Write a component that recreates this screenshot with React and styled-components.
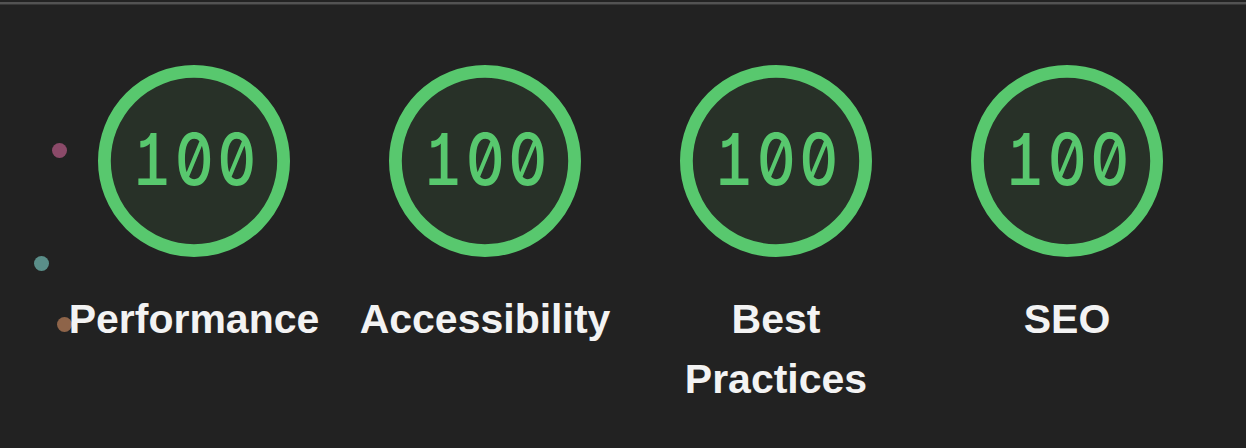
import React from "react";
import styled, { createGlobalStyle } from "styled-components";

const Global = createGlobalStyle`
  html, body { margin: 0; padding: 0; background: #222222; }
  body { width: 1246px; height: 448px; overflow: hidden; }
`;

const Page = styled.div`
  position: relative;
  width: 1246px;
  height: 448px;
  box-sizing: border-box;
  background: #222222;
  border-top: 2px solid #232323;
  overflow: hidden;
`;

const TopRule = styled.div`
  height: 2px;
  background: #535353;
  border-bottom: 1px solid #383838;
`;

const Row = styled.div`
  position: relative;
  z-index: 1;
  display: flex;
  align-items: flex-start;
  gap: 31px;
  padding: 60px 0 0 64px;
`;

const Gauge = styled.div`
  width: 260px;
  display: flex;
  flex-direction: column;
  align-items: center;
`;

const Ring = styled.div`
  position: relative;
  width: 192px;
  height: 192px;
  display: flex;
  align-items: center;
  justify-content: center;
`;

const RingSvg = styled.svg`
  position: absolute;
  inset: 0;
  width: 192px;
  height: 192px;
`;

const Score = styled.span`
  position: relative;
  display: inline-block;
  font-family: Inter, "DejaVu Sans Mono", monospace;
  font-weight: 500;
  font-size: 71px;
  line-height: 1;
  color: #58c86e;
  margin: -4px 0 0 4px;
  font-feature-settings: "zero" 1, "tnum" 1, "cv01" 1;
  letter-spacing: 4px;
  transform: scaleX(0.85);
`;

const Label = styled.div`
  margin-top: 32px;
  font-family: "Liberation Sans", Arial, sans-serif;
  font-weight: 700;
  font-size: 41px;
  line-height: 60px;
  color: #f3f3f3;
  text-align: center;
  max-width: 260px;
`;

const Dot = styled.span`
  position: absolute;
  z-index: 0;
  width: 15px;
  height: 15px;
  border-radius: 50%;
  background: ${(p) => p.$color};
  left: ${(p) => p.$x - 7.5}px;
  top: ${(p) => p.$y - 9.5}px;
`;

const gauges = [
  { score: 100, label: "Performance" },
  { score: 100, label: "Accessibility" },
  { score: 100, label: "Best Practices" },
  { score: 100, label: "SEO" },
];

function GaugeItem({ score, label }) {
  return (
    <Gauge>
      <Ring>
        <RingSvg viewBox="0 0 120 120">
          <circle cx="60" cy="60" r="56" fill="#283128" stroke="#58c86e" strokeWidth="8" />
        </RingSvg>
        <Score>{score}</Score>
      </Ring>
      <Label>{label}</Label>
    </Gauge>
  );
}

export default function App() {
  return (
    <>
      <Global />
      <Page>
        <TopRule />
        <Dot $color="#8b4a69" $x={59} $y={150} />
        <Dot $color="#5a8e89" $x={41.5} $y={263} />
        <Dot $color="#8e6449" $x={64} $y={324} />
        <Row>
          {gauges.map((g) => (
            <GaugeItem key={g.label} {...g} />
          ))}
        </Row>
      </Page>
    </>
  );
}
